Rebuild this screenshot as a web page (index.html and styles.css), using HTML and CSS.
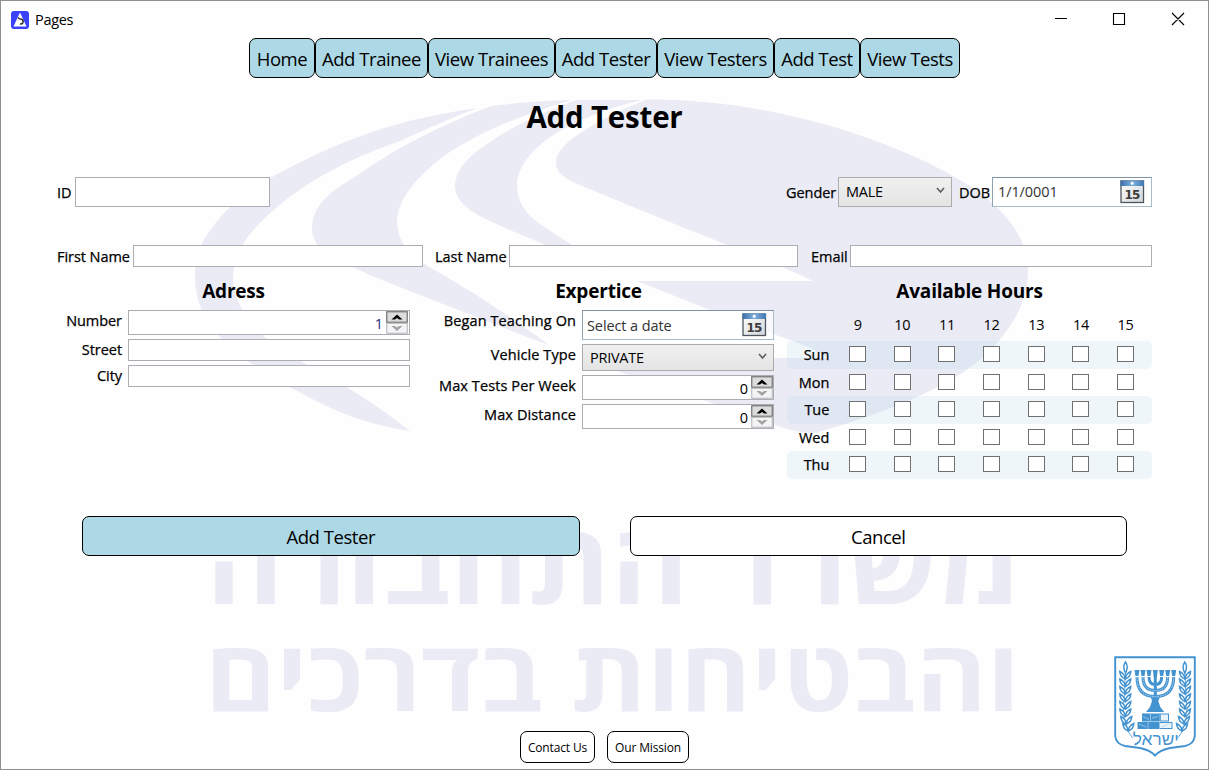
FILE: index.html
```
<!DOCTYPE html>
<html lang="en">
<head>
<meta charset="utf-8">
<title>Pages</title>
<link rel="stylesheet" href="styles.css">
</head>
<body>
<div class="window">
  <svg class="watermark" viewBox="0 0 1209 770" aria-hidden="true">
    <path d="M478 108C420 116 375 129 333 147C285 168 250 188 230 207C205 232 195 252 195 275C195 302 205 322 222 339C245 364 285 386 333 409C360 421 385 427 410 431C390 415 372 403 353 391C325 374 290 357 267 339C245 321 233 297 233 277C234 250 250 231 277 207C315 175 360 155 400 141C425 130 450 118 478 108Z"/>
    <path d="M492 106Q530 101 572 100C530 112 480 131 444 156C415 178 397 200 397 223C398 246 415 260 438 272C475 293 515 320 549 345C510 331 470 314 430 299C390 283 355 270 335 258C318 249 312 240 312 227C313 205 330 192 350 180C365 170 383 158 400 148C430 132 460 117 492 106Z"/>
    <path d="M577 100H642C610 107 575 121 550 137C527 154 517 170 517 187C518 206 530 218 546 228C565 241 588 254 605 268C575 257 545 245 510 230C480 217 455 206 455 186C456 168 470 155 490 142C515 125 545 111 577 100Z"/>
    <path d="M647 99.500C700 99 755 107 800 118C870 135 930 160 973 188C1008 212 1028 240 1028 271C1028 303 1010 335 975 364C945 387 890 412 815 433Q798 434 773 424L703 400L620 372L582 358H830Q805 344 773 334L710 310L637 281H813C785 267 745 252 687 229L633 207L587 188C565 179 556 173 556 163C556 150 570 139 590 127Q615 112 647 99.500Z"/>
    <text class="mark-text mark-top" x="1021" y="604" textLength="815" lengthAdjust="spacingAndGlyphs" direction="rtl">משרד התחבורה</text>
    <text class="mark-text mark-bottom" x="1020" y="711" textLength="815" lengthAdjust="spacingAndGlyphs" direction="rtl">והבטיחות בדרכים</text>
  </svg>

  <header class="titlebar">
    <svg class="app-icon" viewBox="0 0 18 18"><rect width="18" height="18" rx="3" fill="#3a43fb"/><path d="M9 1.500L15.500 15.500H2.500Z" fill="#fff"/><path d="M7 6.500Q8.500 8.500 11 8.300Q12.800 9.500 11.800 12Q10.800 13.300 9 12.800" fill="none" stroke="#333" stroke-width="1.500"/></svg>
    <span class="app-name">Pages</span>
    <svg class="window-controls" viewBox="0 0 130 14"><path d="M0 6.500H12M58.500 1.500H69.500V12.500H58.500ZM117 1L129 13M129 1L117 13" fill="none" stroke="#000" stroke-width="1.100"/></svg>
  </header>

  <nav class="nav">
    <a class="nav-item w-home"><span>Home</span></a>
    <a class="nav-item w-add-trainee"><span>Add Trainee</span></a>
    <a class="nav-item w-view-trainees"><span>View Trainees</span></a>
    <a class="nav-item w-add-tester"><span>Add Tester</span></a>
    <a class="nav-item w-view-testers"><span>View Testers</span></a>
    <a class="nav-item w-add-test"><span>Add Test</span></a>
    <a class="nav-item w-view-tests"><span>View Tests</span></a>
  </nav>

  <main class="page">
    <h1 class="page-title">Add Tester</h1>

    <div class="row identity">
      <label class="label l-id">ID</label><div class="box f-id"></div>
      <label class="label l-gender">Gender</label>
      <div class="select f-gender"><span>MALE</span><svg class="chevron" viewBox="0 0 9 7"><path d="M1 1L4.500 5L8 1" /></svg></div>
      <label class="label l-dob">DOB</label>
      <div class="date f-dob"><span>1/1/0001</span>
        <svg class="calendar" viewBox="0 0 25 24"><use href="#cal"/></svg></div>
    </div>

    <div class="row names">
      <label class="label l-first">First Name</label><div class="box f-first"></div>
      <label class="label l-last">Last Name</label><div class="box f-last"></div>
      <label class="label l-email">Email</label><div class="box f-email"></div>
    </div>

    <div class="columns">
      <section class="address">
        <h2>Adress</h2>
        <div class="field"><label class="label">Number</label><div class="number blue"><span>1</span><svg class="spinner" viewBox="0 0 22 23"><use href="#spin"/></svg></div></div>
        <div class="field"><label class="label">Street</label><div class="box"></div></div>
        <div class="field"><label class="label">City</label><div class="box"></div></div>
      </section>

      <section class="expertise">
        <h2>Expertice</h2>
        <div class="field"><label class="label">Began Teaching On</label><div class="date sheer"><span>Select a date</span><svg class="calendar" viewBox="0 0 25 24"><use href="#cal"/></svg></div></div>
        <div class="field"><label class="label">Vehicle Type</label><div class="select"><span>PRIVATE</span><svg class="chevron" viewBox="0 0 9 7"><path d="M1 1L4.500 5L8 1"/></svg></div></div>
        <div class="field"><label class="label">Max Tests Per Week</label><div class="number"><span>0</span><svg class="spinner" viewBox="0 0 22 23"><use href="#spin"/></svg></div></div>
        <div class="field"><label class="label">Max Distance</label><div class="number"><span>0</span><svg class="spinner" viewBox="0 0 22 23"><use href="#spin"/></svg></div></div>
      </section>

      <section class="hours">
        <h2>Available Hours</h2>
        <div class="hours-head"><i></i><span>9</span><span>10</span><span>11</span><span>12</span><span>13</span><span>14</span><span>15</span></div>
        <div class="day shaded"><label class="label">Sun</label><b></b><b></b><b></b><b></b><b></b><b></b><b></b></div>
        <div class="day"><label class="label">Mon</label><b></b><b></b><b></b><b></b><b></b><b></b><b></b></div>
        <div class="day shaded"><label class="label">Tue</label><b></b><b></b><b></b><b></b><b></b><b></b><b></b></div>
        <div class="day"><label class="label">Wed</label><b></b><b></b><b></b><b></b><b></b><b></b><b></b></div>
        <div class="day shaded"><label class="label">Thu</label><b></b><b></b><b></b><b></b><b></b><b></b><b></b></div>
      </section>
    </div>

    <div class="actions">
      <button class="action primary">Add Tester</button>
      <button class="action">Cancel</button>
    </div>
  </main>

  <footer class="footer">
    <button class="small-button contact">Contact Us</button>
    <button class="small-button mission">Our Mission</button>
    <svg class="emblem" viewBox="14 11 82 101">
      <path d="M15.200 12.200H94.800V91Q94 99 85 101L70 103Q60 105 55 110.500Q50 105 40 103L25 101Q16 99 15.200 91Z" fill="#fff" stroke="#4393d1" stroke-width="1.900"/>
      <g fill="none" stroke="#4393d1" stroke-width="3">
        <path d="M37 32Q37 51.500 55.300 51.500Q73.700 51.500 73.700 32M43 32Q43 45.500 55.300 45.500Q67.600 45.500 67.600 32M49 32Q49 39.500 55.300 39.500Q61.600 39.500 61.600 32M55.300 30V64"/>
        <path d="M37 32Q37 51.500 55.300 51.500Q73.700 51.500 73.700 32M43 32Q43 45.500 55.300 45.500Q67.600 45.500 67.600 32" stroke="#cfe4f4" stroke-width=".8" stroke-dasharray="1.500 1"/>
      </g>
      <path d="M34.500 25h5l-1 6h-3zM40.500 25h5l-1 6h-3zM46.500 25h5l-1 6h-3zM52.800 25h5l-1 7h-3zM59.200 25h5l-1 6h-3zM65.200 25h5l-1 6h-3zM71.200 25h5l-1 6h-3zM51 53h8.600l-1.300 3 2 6 4 5H46l4-5 2-6z" fill="#4393d1"/>
      <path d="M42 68.500h27v8H42zM37.500 77h35v7H37.500z" fill="#4393d1"/>
      <path d="M61 69.500h7v6h-7zM60 78h11.500v5H60z" fill="#e8f3fa"/>
      <path d="M50.500 69v7.500M60 69v7.500M48 77v7M59.500 77v7M43 71.500l6 3M39 79l7 3M62 82l7-3M52 73l6-1.500" fill="none" stroke="#b5d6ed" stroke-width=".7"/>
      <g id="branch">
        <path d="M32.500 93Q20 80 24.500 49Q25 36 25.500 27" fill="none" stroke="#4393d1" stroke-width=".8"/>
        <g fill="#fff" stroke="#4393d1" stroke-width="1.500">
          <path id="leaf" d="M25.300 34Q20 32 19.800 26.500Q25 29 25.300 34Q30.500 32 30.800 26.500Q25.500 29 25.300 34Z"/>
          <use href="#leaf" y="7.500"/><use href="#leaf" y="15"/><use href="#leaf" y="22.500"/><use href="#leaf" y="30"/><use href="#leaf" y="37.500"/><use href="#leaf" x="1" y="45"/><use href="#leaf" x="3" y="52"/>
          <path d="M25.500 28Q22 22 25.500 17Q29 22 25.500 28Z"/>
        </g>
      </g>
      <use href="#branch" transform="matrix(-1 0 0 1 110.300 0)"/>
      <text class="emblem-text" x="78.800" y="100" textLength="46" lengthAdjust="spacingAndGlyphs" direction="rtl">ישראל</text>
    </svg>
  </footer>
</div>

<svg class="defs" width="0" height="0">
  <defs>
    <linearGradient id="calBlue" x2="1"><stop stop-color="#3a6fa8"/><stop offset=".5" stop-color="#7fb0de"/><stop offset="1" stop-color="#3f78b2"/></linearGradient>
    <linearGradient id="calPaper" x2="1" y2="1"><stop stop-color="#fff"/><stop offset="1" stop-color="#d3d5d8"/></linearGradient>
    <symbol id="cal" viewBox="0 0 25 24">
      <rect x="1" y="1" width="22.500" height="21.500" fill="url(#calPaper)" stroke="#4d565e" stroke-width="1.300"/>
      <rect x=".5" y=".5" width="23.500" height="5.500" fill="url(#calBlue)"/>
      <circle cx="12.200" cy="3.200" r="1.500" fill="#fff"/>
      <text class="cal-text" x="4.600" y="19">1</text>
      <text class="cal-text" x="12" y="19">5</text>
    </symbol>
    <symbol id="spin" viewBox="0 0 22 23">
      <rect x=".75" y=".75" width="20.500" height="10.500" fill="#dcdcdc" stroke="#707070" stroke-width="1.200"/>
      <rect x=".75" y="12.250" width="20.500" height="10" fill="#f4f4f4" stroke="#adb2b5"/>
      <path d="M5.500 8.500L11 3.500L16.500 8.500H13L11 7L9 8.500Z" fill="#000"/>
      <path d="M5.500 15L11 20L16.500 15H13L11 16.500L9 15Z" fill="#a3a3a3"/>
    </symbol>
  </defs>
</svg>
</body>
</html>
```
FILE: styles.css
```
* { box-sizing: border-box; }
body { margin: 0; font-family: "Open Sans", "Noto Sans", sans-serif; color: #000; background: #fff; }
.window { position: relative; width: 1209px; height: 770px; border: 1px solid #8f8f8f; overflow: hidden; display: flex; flex-direction: column; background: #fefefe; }
.watermark { position: absolute; left: -1px; top: -1px; width: 1209px; height: 770px; fill: #ebebf5; }
.mark-text { font-family: "Open Sans", "DejaVu Sans", sans-serif; font-weight: 700; }
.mark-top { font-size: 113px; }
.mark-bottom { font-size: 99px; }
.defs { position: absolute; }
.titlebar, .nav, .page, .footer { position: relative; }

.titlebar { height: 37px; display: flex; align-items: center; padding: 0 23px 0 10px; }
.app-icon { width: 18px; height: 18px; }
.app-name { margin-left: 6px; font-size: 14.500px; letter-spacing: -.3px; flex: 1; }
.window-controls { width: 130px; height: 14px; margin-top: -1px; }

.nav { display: flex; padding-left: 248px; height: 40px; }
.nav-item { flex: none; height: 40px; border: 1px solid #000; border-radius: 7px; background: #add8e6; display: flex; align-items: center; justify-content: center; font-size: 18.500px; letter-spacing: -.45px; white-space: nowrap; padding-top: 1px; }
.w-home { width: 66px; }
.w-add-trainee { width: 113px; }
.w-view-trainees { width: 127px; }
.w-add-tester { width: 102px; }
.w-view-testers { width: 117px; }
.w-add-test { width: 86px; }
.w-view-tests { width: 100px; }

.page { padding: 0 56px; }
.page-title { margin: 0; height: 79px; line-height: 77px; text-align: center; font-size: 29.500px; font-weight: 700; letter-spacing: -.2px; }
.row { display: flex; }
.identity { margin-top: 20px; height: 30px; }
.names { margin-top: 38px; height: 22px; }
.label { font-size: 14.500px; white-space: nowrap; letter-spacing: -.05px; -webkit-text-stroke: .25px #000; }
.row .label { display: flex; align-items: center; flex: none; }
.box, .number { border: 1px solid #abadb3; background: #fff; }
.l-id { width: 18px; }
.f-id { width: 195px; margin-right: auto; }
.l-gender { width: 52px; }
.f-gender { width: 114px; margin-right: 7px; }
.l-dob { width: 33px; }
.f-dob { width: 160px; }
.l-first { width: 76px; }
.f-first { width: 290px; margin-right: 12px; }
.l-last { width: 74px; }
.f-last { width: 289px; margin-right: 13px; }
.l-email { width: 39px; }
.f-email { width: 302px; }

.select { border: 1px solid #acacac; background: linear-gradient(#f0f0f0, #e4e4e4); display: flex; align-items: center; justify-content: space-between; padding: 0 6px 0 7px; font-size: 14.500px; letter-spacing: -.25px; }
.f-gender span { margin-top: -2px; }
.chevron { width: 9px; height: 7px; margin-top: -3px; fill: none; stroke: #606060; stroke-width: 1.7; }
.date { border: 1px solid; border-color: #7f92a5 #a9bac8 #a9bac8 #8fa1b2; background: #fff; display: flex; align-items: center; justify-content: space-between; padding: 0 6px 0 5px; font-size: 14.500px; letter-spacing: -.1px; color: #333; }
.f-dob span { margin-top: -2px; }
.sheer { background: linear-gradient(#fff, #fff) content-box, rgba(255, 255, 255, .7); padding-left: 4px; }
.calendar { width: 25px; height: 24px; }
.cal-text { font: 700 12px "DejaVu Sans", sans-serif; fill: #3c3c3c; }

.columns { display: grid; grid-template-columns: 353px 351px 365px; column-gap: 13px; height: 249px; }
h2 { margin: 0; height: 43px; line-height: 49px; text-align: center; font-size: 19px; font-weight: 700; letter-spacing: -.2px; }
.field { display: flex; justify-content: space-between; margin-bottom: 4px; }
.field .label { flex: 1; text-align: right; padding-right: 6px; line-height: 22px; }
.expertise .label { letter-spacing: .1px; }
.address .field > div { width: 282px; }
.expertise .field > div { width: 192px; }
.field .box { height: 22px; }
.field .number { height: 25px; }
.field .date { height: 30px; }
.field .select { height: 27px; }
.number { display: flex; justify-content: flex-end; font-size: 14.500px; }
.number span { line-height: 25px; padding-right: 3px; }
.blue span { color: #1b2e7c; }
.spinner { width: 22px; height: 23px; }
.address .number { padding-right: 1px; }

.hours-head, .day { display: grid; grid-template-columns: 48.300px repeat(7, 44.670px); }
.hours-head { height: 31px; font-size: 14.500px; text-align: center; line-height: 29px; letter-spacing: -.3px; }
.day { height: 27.500px; border-radius: 5px; background-clip: padding-box; }
.shaded { background-color: rgba(173, 216, 230, .2); }
.day .label { text-align: right; padding-right: 6px; line-height: 28px; }
.day b { width: 17px; height: 16px; border: 1px solid #707070; background: #fff; margin: 5px auto 0; }

.actions { display: flex; gap: 50px; padding: 0 25px; }
.action { flex: 1; height: 40px; border: 1px solid #000; border-radius: 7px; background: #fff; font: 400 18.500px "Open Sans", "Noto Sans", sans-serif; letter-spacing: -.45px; padding: 1px 0 0; }
.primary { background: #add8e6; }

.footer { flex: 1; display: flex; padding: 0 12px 0 519px; align-items: flex-end; }
.small-button { height: 32px; margin-bottom: 6px; border: 1px solid #000; border-radius: 7px; background: #fff; font: 400 12px "Open Sans", "Noto Sans", sans-serif; letter-spacing: -.15px; padding: 1px 0 0; white-space: nowrap; }
.contact { width: 75px; margin-right: 12px; }
.mission { width: 82px; }
.emblem { width: 82px; height: 101px; margin: 0 0 12px auto; }
.emblem-text { font: 400 17px "Liberation Sans", sans-serif; fill: #4393d1; }
```
